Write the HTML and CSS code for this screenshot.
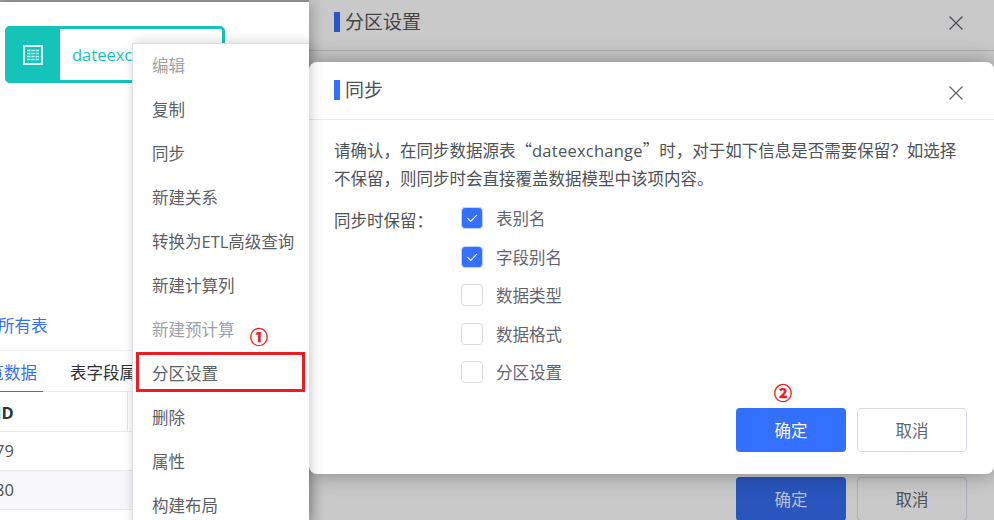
FILE: index.html
```html
<!DOCTYPE html>
<html lang="zh-CN">
<head>
<meta charset="utf-8">
<title>同步</title>
<link rel="stylesheet" href="styles.css">
</head>
<body>
<div class="stage">
  <section class="back-modal">
    <header class="back-head">
      <span class="title-bar title-bar-dim"></span>
      <h2 class="title">分区设置</h2>
      <svg class="close" viewBox="0 0 14 14"><path d="M.5.5l13 13M13.5.5l-13 13"/></svg>
    </header>
    <footer class="back-foot">
      <button class="btn btn-primary-dim">确定</button>
      <button class="btn btn-plain-dim">取消</button>
    </footer>
  </section>

  <aside class="left-panel">
    <div class="node">
      <div class="node-icon">
        <svg viewBox="0 0 20 20" width="20" height="20">
          <rect x="1" y="1" width="18" height="18" fill="none" stroke="#d8f5f2" stroke-width="2"/>
          <path d="M4 5.5h12M4 8.5h12M4 11.5h12M4 14.5h12" stroke="#d8f5f2" stroke-width="1.4" stroke-dasharray="3.4 .9"/>
        </svg>
      </div>
      <div class="node-name">dateexchange</div>
    </div>
    <a class="all-tables">所有表</a>
    <div class="tabs">
      <span class="tab tab-active">预览数据</span>
      <span class="tab">表字段属性</span>
    </div>
    <div class="row row-head"><span class="cell-id">ID</span></div>
    <div class="row"><span class="cell-num">79</span></div>
    <div class="row row-alt"><span class="cell-num">80</span></div>
  </aside>

  <section class="dialog">
    <header class="dialog-head">
      <span class="title-bar"></span>
      <h2 class="title">同步</h2>
      <svg class="close close-low" viewBox="0 0 14 14"><path d="M.5.5l13 13M13.5.5l-13 13"/></svg>
    </header>
    <div class="dialog-body">
      <p class="message">请确认&#xFF0C;在同步数据源表<span class="cjk">“</span><span class="latin">dateexchange</span><span class="cjk">”</span>时&#xFF0C;对于如下信息是否需要保留&#xFF1F;如选择不保留&#xFF0C;则同步时会直接覆盖数据模型中该项内容。</p>
      <div class="form-row">
        <span class="form-label">同步时保留&#xFF1A;</span>
        <div class="checks">
          <div class="check"><span class="box box-on"><svg viewBox="0 0 22 22"><path d="M6 11.2l3.6 3.6 6.6-7"/></svg></span><span>表别名</span></div>
          <div class="check"><span class="box box-on"><svg viewBox="0 0 22 22"><path d="M6 11.2l3.6 3.6 6.6-7"/></svg></span><span>字段别名</span></div>
          <div class="check"><span class="box"></span><span>数据类型</span></div>
          <div class="check"><span class="box"></span><span>数据格式</span></div>
          <div class="check"><span class="box"></span><span>分区设置</span></div>
        </div>
      </div>
    </div>
    <footer class="dialog-foot">
      <span class="mark mark-two">②</span>
      <button class="btn btn-primary">确定</button>
      <button class="btn btn-plain">取消</button>
    </footer>
  </section>

  <nav class="menu">
    <div class="menu-item menu-off">编辑</div>
    <div class="menu-item">复制</div>
    <div class="menu-item">同步</div>
    <div class="menu-item">新建关系</div>
    <div class="menu-item">转换为ETL高级查询</div>
    <div class="menu-item">新建计算列</div>
    <div class="menu-item menu-off">新建预计算<span class="mark mark-one">①</span></div>
    <div class="menu-item menu-hot">分区设置</div>
    <div class="menu-item">删除</div>
    <div class="menu-item">属性</div>
    <div class="menu-item">构建布局</div>
  </nav>
</div>
</body>
</html>
```
FILE: styles.css
```css
*, *::after { box-sizing: border-box; }
html, body { margin: 0; height: 100%; overflow: hidden; }
body {
  font-family: "Open Sans", "Noto Sans CJK SC", sans-serif;
  font-size: 16.5px;
  color: #4d5158;
}
.cjk { font-family: "Noto Sans CJK SC", sans-serif; }
.latin { letter-spacing: .25px; }
.stage {
  position: relative;
  width: 994px;
  height: 520px;
  overflow: hidden;
  background: #999;
}
.title { margin: 0; font-size: 19px; font-weight: 400; line-height: 24px; }
.title-bar { width: 6px; height: 20px; margin-right: 5px; background: #3370ff; flex: none; }
.title-bar-dim { background: #2955c6; }
.close { width: 14px; height: 14px; margin: 3px 0 0 auto; fill: none; stroke: #5d6473; stroke-width: 1.2; flex: none; }
.close-low { margin-top: 6px; }

.back-modal {
  position: absolute;
  left: 309px; top: 0; width: 685px; height: 520px;
  background: #c9c9c9;
  display: flex;
  flex-direction: column;
  justify-content: space-between;
}
.back-head {
  height: 51px;
  padding: 0 31px 7px 25px;
  display: flex;
  align-items: center;
  border-bottom: 1px solid #aeb0b6;
  color: #454545;
}
.back-head .close { stroke: #484d58; }
.back-foot { display: flex; gap: 11px; padding-left: 427px; margin-bottom: -1px; }

.btn {
  width: 110px; height: 44px;
  border-radius: 4px;
  font: inherit;
  padding: 0;
  border: 1px solid transparent;
}
.btn-primary { background: #3370ff; color: #fff; }
.btn-plain { background: #fff; border-color: #d8dbe6; color: #5f6673; }
.btn-primary-dim { background: #2955bd; color: #b8c4de; }
.btn-plain-dim { background: #c9c9c9; border-color: #abadb8; color: #4d525c; }

.left-panel {
  position: absolute;
  left: 0; top: 2px; width: 309px; height: 518px;
  background: #fff;
  box-shadow: 4px 0 12px rgba(0, 0, 0, .22);
}
.node {
  display: flex;
  width: 220px; height: 57px;
  margin: 24px 0 0 5px;
  border: 3px solid #14c4b8;
  border-left: 0;
  border-radius: 5px;
  background: #fff;
}
.node-icon {
  width: 55px;
  margin: -3px 0;
  background: #14c4b8;
  border-radius: 5px 0 0 5px;
  display: flex; align-items: center; justify-content: center;
}
.node-name { padding-left: 12px; line-height: 52px; color: #14c4b8; }
.all-tables { display: block; margin: 232px 0 0 -2px; line-height: 22px; color: #3370ff; white-space: nowrap; }
.tabs {
  display: flex;
  height: 42px;
  margin-top: 13px;
  border-top: 1px solid #eff0f4;
  border-bottom: 1px solid #e8e9f0;
  white-space: nowrap;
  line-height: 44px;
}
.tab { flex: none; color: #303133; }
.tab:last-child { margin-left: 27px; }
.tab-active { margin-left: -29px; width: 72px; color: #3370ff; border-bottom: 1px solid #3370ff; height: 41px; }
.row { height: 39px; padding-top: 1px; border-bottom: 1px solid #e8e9f0; line-height: 36px; }
.row-head { position: relative; height: 40px; padding-top: 3px; font-weight: 700; color: #303133; }
.row-head::after { content: ""; position: absolute; left: 127px; top: 0; bottom: 0; width: 1px; background: #e8e9f0; }
.row-alt { background: #f8f8fb; }
.cell-id { margin-left: -4px; }
.cell-num { margin-left: -5px; }

.dialog {
  position: absolute;
  left: 309px; top: 62px; width: 685px; height: 412px;
  background: #fff;
  border-radius: 8px;
  box-shadow: 0 0 22px rgba(0, 0, 0, .36);
  display: flex;
  flex-direction: column;
}
.dialog-head {
  height: 58px;
  padding: 0 31px 1px 25px;
  display: flex;
  align-items: center;
  border-bottom: 1px solid #e8e8ec;
  flex: none;
}
.dialog-body { padding: 16px 25px 0 25px; }
.message { margin: 0; line-height: 28px; }
.form-row { display: flex; margin-top: 15px; }
.form-label { width: 127px; line-height: 28px; margin-top: -1px; }
.checks { display: flex; flex-direction: column; gap: 10.5px; margin-top: -4px; color: #5f6673; }
.check { display: flex; align-items: center; height: 28px; gap: 13px; }
.box { width: 22px; height: 22px; border: 1px solid #d8dbe6; border-radius: 4px; background: #fff; }
.box-on { background: #3370ff; border-color: #c4d4f8; }
.box svg { display: block; width: 20px; height: 20px; fill: none; stroke: #fff; stroke-width: 1.2; }
.dialog-foot { position: relative; display: flex; gap: 11px; margin-top: auto; padding: 0 27px 22px 427px; }
.mark { color: #ed1c24; font-weight: 700; line-height: 20px; font-size: 18px; -webkit-text-stroke: .5px #ed1c24; }
.mark-two { position: absolute; left: 465px; top: -25px; }
.mark-one { position: absolute; left: 117px; top: 19px; }

.menu {
  position: absolute;
  left: 132px; top: 43px; width: 177px; height: 490px;
  background: #fff;
  border: 1px solid #dcdfe6;
  border-right: 0;
  box-shadow: 2px 0 12px rgba(0, 0, 0, .2);
  color: #5c5f66;
}
.menu-item { position: relative; height: 44px; line-height: 44px; padding-left: 19px; white-space: nowrap; }
.menu-off { color: #9ca1a8; }
.menu-hot::after {
  content: "";
  position: absolute;
  left: 3px; top: 0;
  width: 169px; height: 40px;
  border: 3px solid #ed1c24;
}
```
